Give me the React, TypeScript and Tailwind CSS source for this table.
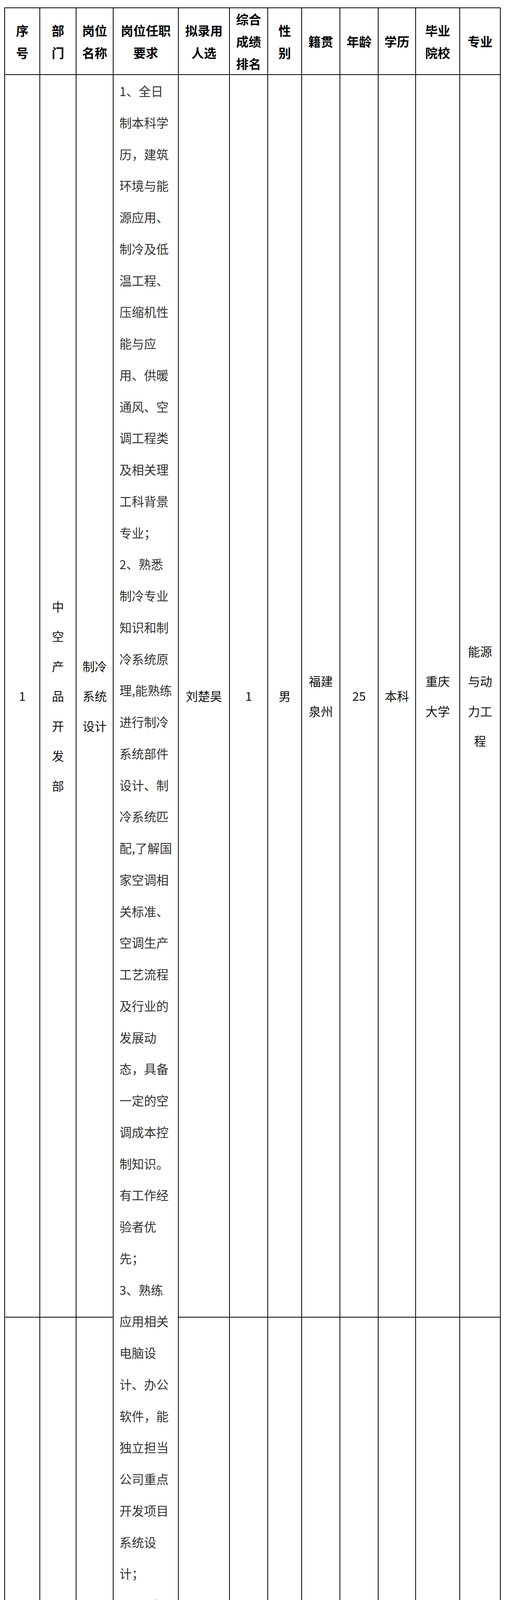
import React from "react";

type CellProps = {
  lines: string[];
  head?: boolean;
  className?: string;
};

// one grid cell; every line is written out so the wrap matches the sheet
const Cell = ({ lines, head, className = "" }: CellProps) => {
  return (
    <div
      className={`flex flex-col items-center justify-center border-r-2 border-b-2 border-black text-center ${
        head
          ? "text-[32px] leading-[57px] font-bold text-black"
          : "text-[31px] leading-[76.5px] text-[#111]"
      } ${className}`}
    >
      {lines.map((l, i) => (
        <div key={i} className="whitespace-nowrap">
          {l}
        </div>
      ))}
    </div>
  );
};

const headers: string[][] = [
  ["序", "号"],
  ["部", "门"],
  ["岗位", "名称"],
  ["岗位任职", "要求"],
  ["拟录用", "人选"],
  ["综合", "成绩", "排名"],
  ["性", "别"],
  ["籍贯"],
  ["年龄"],
  ["学历"],
  ["毕业", "院校"],
  ["专业"],
];

const requirements = [
  "1、全日",
  "制本科学",
  "历，建筑",
  "环境与能",
  "源应用、",
  "制冷及低",
  "温工程、",
  "压缩机性",
  "能与应",
  "用、供暖",
  "通风、空",
  "调工程类",
  "及相关理",
  "工科背景",
  "专业；",
  "2、熟悉",
  "制冷专业",
  "知识和制",
  "冷系统原",
  "理,能熟练",
  "进行制冷",
  "系统部件",
  "设计、制",
  "冷系统匹",
  "配,了解国",
  "家空调相",
  "关标准、",
  "空调生产",
  "工艺流程",
  "及行业的",
  "发展动",
  "态，具备",
  "一定的空",
  "调成本控",
  "制知识。",
  "有工作经",
  "验者优",
  "先；",
  "3、熟练",
  "应用相关",
  "电脑设",
  "计、办公",
  "软件，能",
  "独立担当",
  "公司重点",
  "开发项目",
  "系统设",
  "计；",
  "4、具有",
  "良好的学",
  "习、创新",
  "能力、解",
  "决问题能",
  "力、独立",
  "思考能",
  "力、团队",
  "协作、沟",
  "通和执行",
  "能力；",
  "5、严谨",
  "稳健、思",
  "路清晰、",
  "创新性",
  "强、能够",
  "承受较大",
  "工作压",
  "力。",
];

const rows = [
  {
    no: ["1"],
    dept: ["中", "空", "产", "品", "开", "发", "部"],
    post: ["制冷", "系统", "设计"],
    name: ["刘楚昊"],
    rank: ["1"],
    sex: ["男"],
    home: ["福建", "泉州"],
    age: ["25"],
    edu: ["本科"],
    school: ["重庆", "大学"],
    major: ["能源", "与动", "力工", "程"],
  },
  {
    no: ["2"],
    dept: ["产", "品", "开", "发", "部"],
    post: ["制冷", "系统", "设计"],
    name: ["潘孝林"],
    rank: ["2"],
    sex: ["男"],
    home: ["四川", "绵阳"],
    age: ["24"],
    edu: ["本科"],
    school: ["大连", "海洋", "大学"],
    major: ["能源", "与环", "境工", "程"],
  },
];

export default function App() {
  return (
    <div
      className="h-[5614px] overflow-hidden bg-white pt-[19px] pl-[11px]"
      style={{ fontFamily: '"Noto Sans CJK SC", "Noto Sans", sans-serif' }}
    >
      <div className="grid w-fit grid-cols-[90px_93px_95px_167px_131px_98px_87px_98px_98px_96px_113px_104px] grid-rows-[171px_3181px_2233px] border-t-2 border-l-2 border-black">
        {headers.map((h, i) => (
          <Cell key={i} lines={h} head />
        ))}

        {rows.map((r, idx) => (
          <React.Fragment key={idx}>
            <Cell lines={r.no} />
            <Cell lines={r.dept} />
            <Cell lines={r.post} />
            {idx === 0 && (
              <div className="row-span-2 overflow-hidden border-r-2 border-b-2 border-black pl-[15px] text-[31.5px] leading-[80.75px] text-[#333]">
                {requirements.map((l, i) => (
                  <div key={i} className="whitespace-nowrap">
                    {l}
                  </div>
                ))}
              </div>
            )}
            <Cell lines={r.name} />
            <Cell lines={r.rank} />
            <Cell lines={r.sex} />
            <Cell lines={r.home} />
            <Cell lines={r.age} />
            <Cell lines={r.edu} />
            <Cell lines={r.school} />
            <Cell lines={r.major} />
          </React.Fragment>
        ))}
      </div>
    </div>
  );
}
